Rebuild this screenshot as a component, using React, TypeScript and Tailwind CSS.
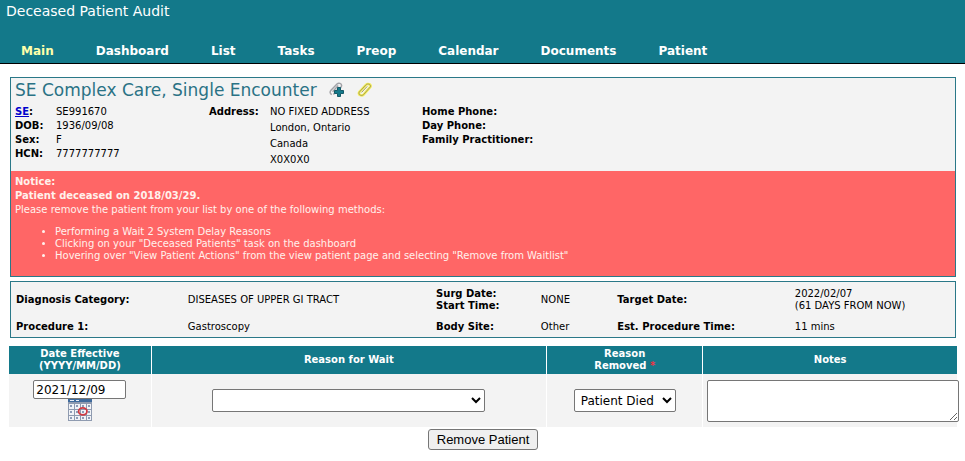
import React from "react";

const navItems = ["Main", "Dashboard", "List", "Tasks", "Preop", "Calendar", "Documents", "Patient"];

function AddAttachmentIcon() {
  return (
    <svg width="16" height="16" viewBox="0 0 16 16" fill="none" aria-hidden="true">
      <path
        d="M3.6 9.8 9.2 3.4M2.8 12.6C.6 11.8.8 9.4 2 8.2L8 2c1.6-1.6 4.8-.6 4.6 1.8L11.6 6M4.4 12.4 9 7"
        stroke="#a3a3a8"
        strokeWidth="1.5"
      />
      <path d="M8.5 5.5h3v3h3v3h-3v3h-3v-3h-3v-3h3z" fill="#13798a" stroke="#145a68" strokeWidth="1" />
    </svg>
  );
}

function AttachmentIcon() {
  return (
    <svg width="16" height="16" viewBox="0 0 16 16" fill="none" aria-hidden="true">
      <path
        d="M2.2 10.2 9 2.8c1.6-1.6 5.4-.6 4.4 2L6.6 12.6c-1.8 1.8-5.6.4-4.4-2.4z"
        stroke="#f4ee55"
        strokeWidth="2.6"
      />
      <path
        d="M4.6 10.4 10.2 4.4M2.2 10.2 9 2.8c1.6-1.6 5.4-.6 4.4 2L6.6 12.6c-1.8 1.8-5.6.4-4.4-2.4z"
        stroke="#a8a05c"
        strokeWidth="1"
      />
    </svg>
  );
}

function CalendarIcon() {
  return (
    <svg width="24" height="22" viewBox="0 0 24 22" aria-hidden="true">
      <rect width="24" height="22" fill="#8f9bb0" />
      <rect width="24" height="3" fill="#3e6a9c" />
      <path d="M2 1.5h4M8 1.5h3" stroke="#e8eef6" strokeWidth="1" />
      {[5, 11, 17].map((y) =>
        [1, 7, 13, 19].map((x) => (
          <g key={`${x}-${y}`}>
            <rect x={x} y={y} width={x === 19 ? 4 : 5} height={y === 17 ? 4 : 5} fill="#f1f3f7" />
            <rect x={x + 1} y={y + 1} width="2" height="2" fill="#8c9cb8" />
          </g>
        )),
      )}
      <ellipse cx="14.8" cy="12.3" rx="4.2" ry="3.5" fill="none" stroke="#cf3a42" strokeWidth="1.8" />
    </svg>
  );
}

function PatientCard() {
  return (
    <section className="border border-[#2a7888] bg-[#f3f3f3]">
      <div className="px-1 pb-[3px]">
        <div className="flex h-[26px] items-start gap-3">
          <h1 className="text-[17px] leading-6 text-[#2a7285]">SE Complex Care, Single Encounter</h1>
          <button type="button" aria-label="Add attachment" className="pt-1"><AddAttachmentIcon /></button>
          <button type="button" aria-label="View attachments" className="pt-1"><AttachmentIcon /></button>
        </div>
        <div className="grid grid-cols-[194px_213px_1fr] leading-[14px]">
          <dl className="grid grid-cols-[41px_1fr] content-start pt-px">
            <dt className="font-bold"><a href="#se" className="text-[#0000cc] underline">SE</a>:</dt>
            <dd>SE991670</dd>
            <dt className="font-bold">DOB:</dt>
            <dd>1936/09/08</dd>
            <dt className="font-bold">Sex:</dt>
            <dd>F</dd>
            <dt className="font-bold">HCN:</dt>
            <dd>7777777777</dd>
          </dl>
          <dl className="grid grid-cols-[61px_1fr] content-start leading-4">
            <dt className="font-bold">Address:</dt>
            <dd>
              NO FIXED ADDRESS<br />London, Ontario<br />Canada<br />X0X0X0
            </dd>
          </dl>
          <dl className="pt-px font-bold">
            <dt>Home Phone:</dt>
            <dt>Day Phone:</dt>
            <dt>Family Practitioner:</dt>
          </dl>
        </div>
      </div>
      <div className="bg-[#ff6666] px-1 pt-1 pb-3.5 leading-[14px] text-[#fff1ec]">
        <p className="font-bold">Notice:</p>
        <p className="font-bold">Patient deceased on 2018/03/29.</p>
        <p>Please remove the patient from your list by one of the following methods:</p>
        <ul className="mt-[9px] list-disc pl-10 leading-3">
          <li>Performing a Wait 2 System Delay Reasons</li>
          <li>Clicking on your "Deceased Patients" task on the dashboard</li>
          <li>Hovering over "View Patient Actions" from the view patient page and selecting "Remove from Waitlist"</li>
        </ul>
      </div>
    </section>
  );
}

function ProcedureCard() {
  return (
    <section className="mt-1 border border-[#2a7888] bg-[#f3f3f3]">
      <table className="w-full table-fixed text-left leading-3 [&_td]:py-1 [&_td]:pl-[5px] [&_th]:py-1 [&_th]:pl-[5px]">
        <colgroup>
          <col className="w-[18.2%]" />
          <col className="w-[26.3%]" />
          <col className="w-[11.1%]" />
          <col className="w-[8.1%]" />
          <col className="w-[18.8%]" />
          <col />
        </colgroup>
        <tbody>
          <tr className="h-[35px]">
            <th scope="row">Diagnosis Category:</th>
            <td>DISEASES OF UPPER GI TRACT</td>
            <th scope="row">Surg Date:<br />Start Time:</th>
            <td>NONE</td>
            <th scope="row">Target Date:</th>
            <td>2022/02/07<br />(61 DAYS FROM NOW)</td>
          </tr>
          <tr>
            <th scope="row">Procedure 1:</th>
            <td>Gastroscopy</td>
            <th scope="row">Body Site:</th>
            <td>Other</td>
            <th scope="row">Est. Procedure Time:</th>
            <td>11 mins</td>
          </tr>
        </tbody>
      </table>
    </section>
  );
}

function RemovalForm() {
  const field = "rounded-xs border border-[#767676] bg-white text-xs text-black";
  return (
    <form className="mt-2 mr-2 ml-[9px]" onSubmit={(e) => e.preventDefault()}>
      <table className="w-full table-fixed text-center leading-3">
        <colgroup>
          <col className="w-[15%]" />
          <col className="w-[41.7%]" />
          <col className="w-[16.5%]" />
          <col />
        </colgroup>
        <thead className="bg-[#13798a] text-white">
          <tr className="h-7">
            <th scope="col" className="border-r border-white">
              <label htmlFor="date">Date Effective<br />(YYYY/MM/DD)</label>
            </th>
            <th scope="col" className="border-r border-white"><label htmlFor="wait">Reason for Wait</label></th>
            <th scope="col" className="border-r border-white">
              <label htmlFor="removed">Reason<br />Removed <span className="text-[#ee3344]">*</span></label>
            </th>
            <th scope="col"><label htmlFor="notes">Notes</label></th>
          </tr>
        </thead>
        <tbody className="bg-[#f3f3f3]">
          <tr className="h-[53px]">
            <td className="border-r border-white">
              <div className="flex flex-col items-center">
                <input id="date" type="text" defaultValue="2021/12/09" className={`${field} h-[19px] w-[93px] px-0.5`} />
                <button type="button" aria-label="Choose date"><CalendarIcon /></button>
              </div>
            </td>
            <td className="border-r border-white">
              <select id="wait" className={`${field} h-[23px] w-[273px]`}>
                <option></option>
              </select>
            </td>
            <td className="border-r border-white">
              <select id="removed" className={`${field} h-[23px] w-[102px] pl-0.5`}>
                <option>Patient Died</option>
              </select>
            </td>
            <td className="pl-1">
              <textarea id="notes" className={`${field} -mr-0.5 block h-[42px] w-[calc(100%+2px)] resize`} />
            </td>
          </tr>
        </tbody>
      </table>
      <div className="mt-0.5 flex justify-center">
        <button
          type="submit"
          className="h-[21px] rounded-[3px] border border-[#767676] bg-[#efefef] px-2 font-['Liberation_Sans',Arial,sans-serif] text-[13px] leading-4 text-black"
        >
          Remove Patient
        </button>
      </div>
    </form>
  );
}

export default function App() {
  return (
    <div className="min-h-screen bg-white font-['Verdana','DejaVu_Sans',sans-serif] text-[10px] text-black">
      <header className="border-b border-black bg-[#13798a] text-white">
        <p className="px-1.5 pt-0.5 text-sm leading-[18px]">Deceased Patient Audit</p>
        <nav className="mt-[22px] flex pb-0.5 pl-px text-xs leading-[19px] font-bold">
          {navItems.map((item) => (
            <a
              key={item}
              href={`#${item.toLowerCase()}`}
              className={item === "Main" ? "pr-[21px] pl-5 text-[#ffffaa]" : "px-[21px]"}
            >
              {item}
            </a>
          ))}
        </nav>
      </header>
      <main className="pt-[13px]">
        <div className="mx-[9px] pl-px">
          <PatientCard />
          <ProcedureCard />
        </div>
        <RemovalForm />
      </main>
    </div>
  );
}
